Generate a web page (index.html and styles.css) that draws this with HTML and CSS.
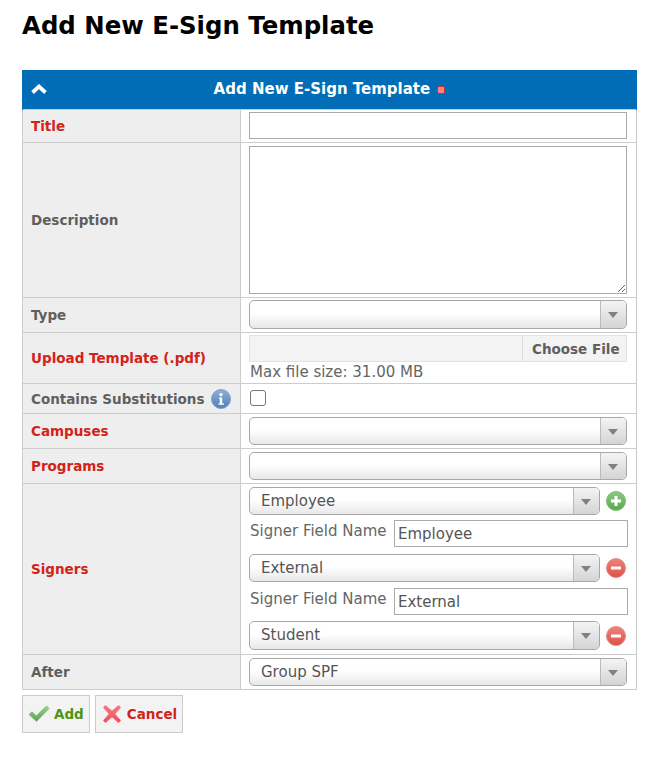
FILE: index.html
```html
<!DOCTYPE html>
<html lang="en">
<head>
  <meta charset="UTF-8" />
  <meta name="viewport" content="width=device-width, initial-scale=1.0" />
  <title>Add New E-Sign Template</title>
  <link rel="stylesheet" href="styles.css">
</head>
<body>
  <h1>Add New E-Sign Template</h1>

  <table class="form-table">
    <colgroup><col class="col-label" /><col /></colgroup>
    <thead>
      <tr>
        <th colspan="2" class="form-head">
          <svg class="chevron" width="16" height="11" viewBox="0 0 16 11"><path d="M1.500 8.500 8 2.500l6.500 6" fill="none" stroke="#fff" stroke-width="3.800" /></svg>
          Add New E-Sign Template
          <span class="req-dot"></span>
        </th>
      </tr>
    </thead>
    <tbody>
      <tr>
        <td class="label required">Title</td>
        <td class="field field-tight"><input class="text wide" type="text" /></td>
      </tr>
      <tr>
        <td class="label">Description</td>
        <td class="field"><textarea class="area"></textarea></td>
      </tr>
      <tr>
        <td class="label">Type</td>
        <td class="field field-tight"><div class="select wide tall"><span class="select-text"></span><span class="select-arrow"></span></div></td>
      </tr>
      <tr>
        <td class="label required">Upload Template (.pdf)</td>
        <td class="field field-tight">
          <div class="file wide"><span class="file-name"></span><span class="file-btn">Choose File</span></div>
          <div class="hint">Max file size: 31.00 MB</div>
        </td>
      </tr>
      <tr>
        <td class="label">
          <div class="label-info">Contains Substitutions
            <svg width="20" height="20" viewBox="0 0 20 20">
              <defs><linearGradient id="blue" x1="0" y1="0" x2="0" y2="1"><stop offset="0" stop-color="#8db0d8" /><stop offset="1" stop-color="#4f7fb8" /></linearGradient></defs>
              <circle cx="10" cy="10" r="9.500" fill="url(#blue)" stroke="#7f9fc6" />
              <circle cx="10" cy="5.600" r="1.700" fill="#fff" />
              <path d="M8 8.500h3.200v6H13v1.300H7.400v-1.300h1.400V9.800H8z" fill="#fff" />
            </svg>
          </div>
        </td>
        <td class="field"><input class="check" type="checkbox" /></td>
      </tr>
      <tr>
        <td class="label required">Campuses</td>
        <td class="field"><div class="select wide"><span class="select-text"></span><span class="select-arrow"></span></div></td>
      </tr>
      <tr>
        <td class="label required">Programs</td>
        <td class="field"><div class="select wide"><span class="select-text"></span><span class="select-arrow"></span></div></td>
      </tr>
      <tr>
        <td class="label required">Signers</td>
        <td class="field">
          <div class="signer-line">
            <div class="select short"><span class="select-text">Employee</span><span class="select-arrow"></span></div>
            <svg width="20" height="20" viewBox="0 0 20 20">
              <defs><linearGradient id="green" x1="0" y1="0" x2="0" y2="1"><stop offset="0" stop-color="#8ccb82" /><stop offset="1" stop-color="#58a94e" /></linearGradient></defs>
              <circle cx="10" cy="10" r="9.500" fill="url(#green)" stroke="#7dba74" />
              <path d="M8.500 5h3v3.500H15v3h-3.500V15h-3v-3.500H5v-3h3.500z" fill="#fff" />
            </svg>
          </div>
          <div class="signer-name"><span class="signer-label">Signer Field Name</span><input class="text name" type="text" value="Employee" /></div>
          <div class="signer-line">
            <div class="select short"><span class="select-text">External</span><span class="select-arrow"></span></div>
            <svg width="20" height="20" viewBox="0 0 20 20">
              <defs><linearGradient id="red" x1="0" y1="0" x2="0" y2="1"><stop offset="0" stop-color="#f0837b" /><stop offset="1" stop-color="#dc5048" /></linearGradient></defs>
              <circle cx="10" cy="10" r="9.500" fill="url(#red)" stroke="#e08a84" />
              <rect x="5" y="8.500" width="10" height="3" fill="#fff" />
            </svg>
          </div>
          <div class="signer-name signer-name-even"><span class="signer-label">Signer Field Name</span><input class="text name" type="text" value="External" /></div>
          <div class="signer-line signer-last">
            <div class="select short tall"><span class="select-text">Student</span><span class="select-arrow"></span></div>
            <svg width="20" height="20" viewBox="0 0 20 20">
              <circle cx="10" cy="10" r="9.500" fill="url(#red)" stroke="#e08a84" />
              <rect x="5" y="8.500" width="10" height="3" fill="#fff" />
            </svg>
          </div>
        </td>
      </tr>
      <tr>
        <td class="label">After</td>
        <td class="field"><div class="select wide"><span class="select-text">Group SPF</span><span class="select-arrow"></span></div></td>
      </tr>
    </tbody>
  </table>

  <div class="actions">
    <a class="btn btn-add">
      <svg width="22" height="18" viewBox="0 0 22 18">
        <defs><linearGradient id="tick" x1="0" y1="0" x2="0" y2="1"><stop offset="0" stop-color="#9ad38f" /><stop offset="1" stop-color="#57a34e" /></linearGradient></defs>
        <path d="M1 9.500 4 6.800l4.300 4L18.500 1 21 3.500 8.500 16.500z" fill="url(#tick)" stroke="#7cb973" stroke-width="0.800" />
      </svg>
      Add
    </a>
    <a class="btn btn-cancel">
      <svg width="20" height="20" viewBox="0 0 20 20">
        <defs><linearGradient id="cross" x1="0" y1="0" x2="0" y2="1"><stop offset="0" stop-color="#f97a80" /><stop offset="1" stop-color="#ee4f5a" /></linearGradient></defs>
        <path d="M3.500 1 10 6.800 16.500 1 19 3.500 13.200 10 19 16.500 16.500 19 10 13.200 3.500 19 1 16.500 6.800 10 1 3.500z" fill="url(#cross)" />
      </svg>
      Cancel
    </a>
  </div>
</body>
</html>
```

FILE: styles.css
```css
body {
  margin: 0;
  padding: 0 22px;
  font-family: "DejaVu Sans", sans-serif;
  font-size: 14px;
  color: #555;
  background-color: #fff;
}
h1 {
  margin: 0;
  padding-top: 11px;
  height: 70px;
  box-sizing: border-box;
  font-size: 24.4px;
  line-height: 29px;
  font-weight: bold;
  color: #000;
}
.form-table {
  width: 615px;
  border-collapse: collapse;
  table-layout: fixed;
}
.col-label {
  width: 218px;
}
.form-head {
  position: relative;
  height: 37px;
  padding: 0 0 2px;
  border-left: 1px solid #006db6;
  border-right: 1px solid #006db6;
  background-color: #006db6;
  color: #fff;
  font-size: 15px;
  font-weight: bold;
  text-align: center;
}
.chevron {
  position: absolute;
  left: 8px;
  top: 14px;
}
.req-dot {
  display: inline-block;
  box-sizing: border-box;
  width: 8px;
  height: 8px;
  margin-left: 2px;
  border: 1px solid #c8313c;
  border-radius: 2px;
  background-color: #f5858a;
}
.label,
.field {
  border: 1px solid #ccc;
}
.label {
  padding: 0 8px;
  background-color: #eee;
  font-size: 13.5px;
  font-weight: bold;
  color: #5f5f5f;
}
.label.required {
  color: #d2231a;
}
.label-info {
  display: flex;
  align-items: center;
  justify-content: space-between;
  padding-right: 1px;
}
.field {
  padding: 3px 9px 3px 8px;
  vertical-align: top;
}
.field-tight {
  padding-top: 2px;
}
.text {
  display: block;
  box-sizing: border-box;
  height: 27px;
  padding: 0 3px;
  border: 1px solid #aaa;
  font: 15px "DejaVu Sans", sans-serif;
  color: #555;
  background-color: #fff;
}
.wide {
  width: 378px;
}
.area {
  display: block;
  box-sizing: border-box;
  width: 378px;
  height: 148px;
  margin: 0;
  padding: 3px;
  border: 1px solid #aaa;
  border-radius: 0;
  resize: both;
}
.select {
  display: flex;
  box-sizing: border-box;
  height: 28px;
  border: 1px solid #a8a8a8;
  border-radius: 5px;
  background: linear-gradient(#fff 0%, #fff 45%, #e8e8e8 100%);
  overflow: hidden;
}
.select.tall {
  height: 29px;
}
.select-text {
  flex: 1;
  padding-left: 11px;
  font-size: 15px;
  line-height: 27px;
  color: #555;
}
.select-arrow {
  position: relative;
  width: 25px;
  border-left: 1px solid #bbb;
  background: linear-gradient(#f4f4f4, #d4d4d4);
}
.select-arrow::after {
  content: "";
  position: absolute;
  left: 7px;
  top: 11px;
  border-top: 6px solid #808080;
  border-left: 5px solid transparent;
  border-right: 5px solid transparent;
}
.short {
  width: 351px;
}
.file {
  display: flex;
  box-sizing: border-box;
  height: 27px;
  background-color: #f3f3f3;
  border: 1px solid #e2e2e2;
}
.file-name {
  flex: 1;
}
.file-btn {
  box-sizing: border-box;
  width: 104px;
  padding-left: 9px;
  border-left: 1px solid #ddd;
  font-size: 13.5px;
  line-height: 27px;
  font-weight: bold;
  color: #5f5f5f;
}
.hint {
  padding: 1px 0 0 1px;
  height: 17px;
  font-size: 15px;
  line-height: 18px;
  color: #666;
}
.check {
  display: block;
  appearance: none;
  width: 16px;
  height: 16px;
  margin: 3px 0 4px 1px;
  border: 1px solid #777;
  border-radius: 3px;
  background-color: #fff;
}
.signer-line {
  display: flex;
  align-items: center;
  gap: 6px;
}
.signer-last {
  margin-bottom: 1px;
}
.signer-name {
  display: flex;
  justify-content: space-between;
  margin: 5px -1px 7px 0;
}
.signer-name-even {
  margin: 6px -1px 6px 0;
}
.signer-label {
  padding-left: 1px;
  font-size: 15px;
  line-height: 23px;
  color: #666;
}
.name {
  width: 234px;
}
.actions {
  display: flex;
  gap: 5px;
  margin-top: 5px;
}
.btn {
  display: flex;
  align-items: center;
  box-sizing: border-box;
  height: 38px;
  border: 1px solid #ccc;
  background-color: #f3f3f3;
  font-size: 13.5px;
  font-weight: bold;
}
.btn-add {
  gap: 4px;
  padding: 0 5px;
  color: #4f9412;
}
.btn-cancel {
  gap: 5px;
  padding: 0 5px 0 6px;
  color: #d2231a;
}
```
